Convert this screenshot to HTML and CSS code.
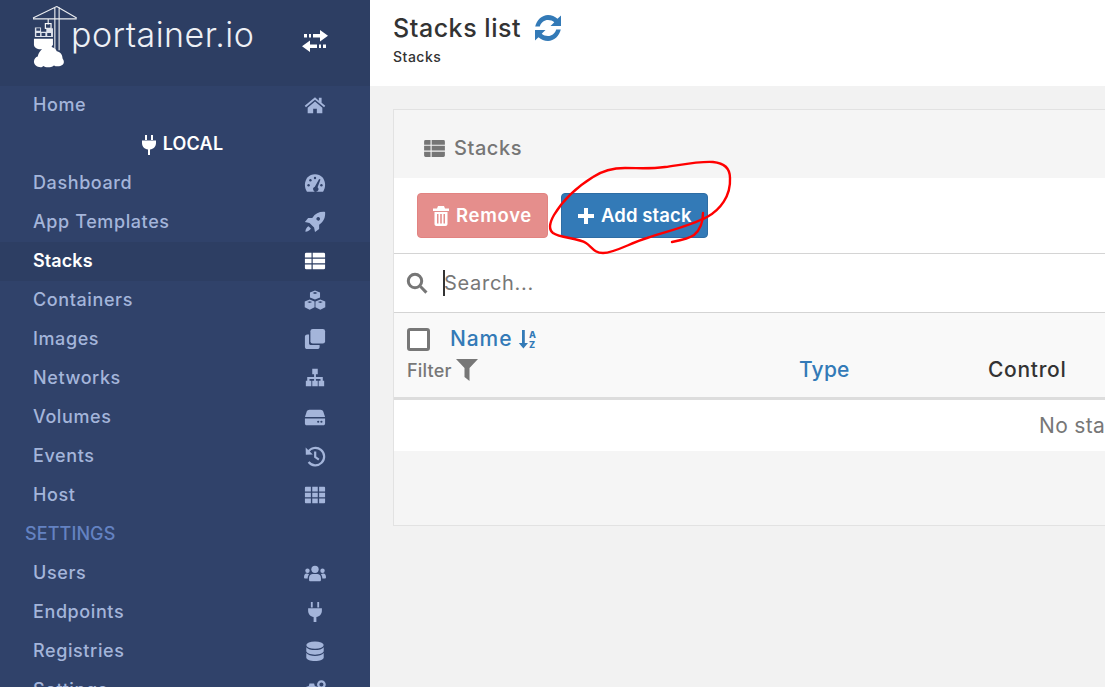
FILE: index.html
```html
<!DOCTYPE html>
<html lang="en">
<head>
<meta charset="utf-8">
<title>Stacks list</title>
<link rel="stylesheet" href="styles.css">
</head>
<body>
<div class="app">
  <aside class="sidebar">
    <div class="brand">
      <svg class="logo" viewBox="0 0 40 70" aria-hidden="true">
        <g fill="none" stroke="#fff" stroke-width="1.2" opacity=".9">
          <path d="M0 18H46M25 5L0 17M25 5L46 17M23 5.500V51M27.500 5.500V51M16 18V24"/>
        </g>
        <rect x="13" y="23" width="6" height="5" fill="none" stroke="#fff" stroke-width="1.200"/>
        <path fill="#dfe3ec" d="M2 27h6.500v4.500H14V28h7v9H2zM7.500 28h-4v2.500h4zM9 33h4v3H9zM15 33h4v3h-4zM3.500 33h4v3h-4z" fill-rule="evenodd"/>
        <path fill="#fff" d="M1 39h20v6c-1 3-4 5-8 5H8c-4 0-7-2-7-5z"/>
        <path fill="#fff" d="M8 69c-4 0-7-2.500-7-6 0-3 2-5 4-5.500C6 53 10 47 16 47c4 0 8 2 9 5 3 .5 6 3 6 7 0 1.500 1.500 2 1.500 4.500S30 68 26 68c-2 0-3-.5-4-1-2 1.500-4 2-6 2-2.500 0-4-1-5-1.500-1 .8-2 1.500-3 1.500z"/>
      </svg>
      <span class="brand-text">portainer.io</span>
      <svg class="switch" viewBox="0 0 26 24" aria-hidden="true">
        <path fill="#fff" d="M2 5h3v3.500H2zM7 5h2v3.500H7zM11 5h7V1l8 5.700-8 5.800V8.500h-7zM0 17.300l8-5.800v4h7V19H8v4zM17 15.500h2V19h-2zM21 15.500h3V19h-3z"/>
      </svg>
    </div>
    <nav class="nav">
      <a class="item"><span>Home</span>
        <svg class="ico" viewBox="0 0 24 24"><path d="M12 3.500L.8 12.800l1.300 1.600L12 6.300l9.900 8.100 1.300-1.600-4-3.300V4h-3v3.300z"/><path d="M12 8.300L4 14.900V21h6v-5h4v5h6v-6.100z"/></svg>
      </a>
      <div class="endpoint">
        <svg class="endpoint-ico" viewBox="0 0 16 20"><path d="M4 0h2v5H4zM10 0h2v5h-2zM1 5.500h14v2.500c0 3.500-2.500 6-6 6.500V20H7v-5.500C3.500 14 1 11.500 1 8z"/></svg>
        <span>LOCAL</span>
      </div>
      <a class="item"><span>Dashboard</span>
        <svg class="ico" viewBox="0 0 24 24"><path d="M12 2.500C5.500 2.500 1 7.500 1 14c0 3 .8 5.300 2.200 7.500h17.600C22.200 19.300 23 17 23 14c0-6.500-4.500-11.500-11-11.500z"/><g fill="#30426a"><circle cx="5" cy="14.500" r="1.300"/><circle cx="7" cy="9" r="1.300"/><circle cx="12" cy="6.500" r="1.300"/><circle cx="19" cy="14.500" r="1.300"/><path d="M16.500 7.500l1.500.6-3.200 8.600a2.800 2.800 0 1 1-3-.6z"/></g></svg>
      </a>
      <a class="item"><span>App Templates</span>
        <svg class="ico" viewBox="0 0 24 24"><path d="M23 1c-6-.5-10.500 1.500-14 6.500H4.500L1 12l5 1 5 5 1 5 4.500-3.500V15c5-3.500 7-8 6.500-14zM17.500 8.500a2 2 0 1 1 0-.01z"/><path d="M5 16.500c-2 .8-3.500 3.500-3.500 6 2.500 0 5-1.500 6-3.500z"/></svg>
      </a>
      <a class="item active"><span>Stacks</span>
        <svg class="ico" viewBox="0 0 24 24"><path d="M2.500 3h5.700v5.300H1V4.500A1.500 1.500 0 0 1 2.500 3zM9.500 3h12A1.500 1.500 0 0 1 23 4.500v3.800H9.500zM1 9.500h7.200v5H1zM9.500 9.500H23v5H9.500zM1 15.700h7.200V21H2.500A1.500 1.500 0 0 1 1 19.500zM9.500 15.700H23v3.800a1.500 1.500 0 0 1-1.500 1.500h-12z"/></svg>
      </a>
      <a class="item"><span>Containers</span>
        <svg class="ico" viewBox="0 0 24 24"><path fill-rule="evenodd" d="M12 1.500l5.500 2.200v5.500L12 11.500 6.500 9.200V3.700zM12 3.300L9.300 4.300 12 5.400l2.700-1.100zM6.200 11.500l5.300 2.200V20L6.200 22.500.8 20v-6.300zM6.200 13.300L3.500 14.300l2.700 1.100 2.700-1.100zM17.800 11.500l5.400 2.200V20l-5.400 2.500L12.500 20v-6.300zM17.800 13.300l-2.700 1 2.700 1.100 2.700-1.100z"/></svg>
      </a>
      <a class="item"><span>Images</span>
        <svg class="ico" viewBox="0 0 24 24"><rect x="7" y="1" width="16" height="16" rx="2.500"/><path d="M3.500 7H5.500v10c0 1 .7 1.600 1.500 1.600h10v2c0 1.400-1 2.400-2.500 2.400h-11C2 23 1 22 1 20.500v-11C1 8 2 7 3.500 7z"/></svg>
      </a>
      <a class="item"><span>Networks</span>
        <svg class="ico" viewBox="0 0 24 24"><path d="M9 2h6v6h-2v3h7.500v4H22v6h-6v-6h2v-2h-5v2h2v6H9v-6h2v-2H6v2h2v6H2v-6h1.500v-4H11V8H9z"/></svg>
      </a>
      <a class="item"><span>Volumes</span>
        <svg class="ico" viewBox="0 0 24 24"><path d="M6 4h12c1.500 0 2.500.8 3 2l2 6H1l2-6c.5-1.200 1.500-2 3-2z"/><path fill-rule="evenodd" d="M1 13.500h22V19c0 1.200-.8 2-2 2H3c-1.200 0-2-.8-2-2zM15.500 16a1.200 1.200 0 1 0 0 2.400 1.200 1.200 0 0 0 0-2.400zM19 16a1.200 1.200 0 1 0 0 2.400A1.200 1.200 0 0 0 19 16z"/></svg>
      </a>
      <a class="item"><span>Events</span>
        <svg class="ico" viewBox="0 0 24 24"><path d="M4.500 7.500A9.500 9.500 0 1 1 5 18.500" fill="none" stroke="currentColor" stroke-width="2.400"/><path d="M1.800 2.800L2 10.500l7.600-.2zM11 7h2.400v5.500l3.500 2.500-1.400 1.900L11 13.700z"/></svg>
      </a>
      <a class="item"><span>Host</span>
        <svg class="ico" viewBox="0 0 24 24"><path d="M2 3h5.500v5.200H1V4a1 1 0 0 1 1-1zM9 3h6v5.200H9zM16.500 3H22a1 1 0 0 1 1 1v4.200h-6.500zM1 9.500h6.500v5H1zM9 9.500h6v5H9zM16.500 9.500H23v5h-6.500zM1 15.800h6.500V21H2a1 1 0 0 1-1-1zM9 15.800h6V21H9zM16.500 15.800H23V20a1 1 0 0 1-1 1h-5.500z"/></svg>
      </a>
      <div class="section"><span>SETTINGS</span></div>
      <a class="item"><span>Users</span>
        <svg class="ico" viewBox="0 0 24 24"><circle cx="12" cy="8" r="4"/><circle cx="3.800" cy="9.500" r="2.400"/><circle cx="20.200" cy="9.500" r="2.400"/><path d="M5.500 19.500v-2c0-3 2-4.500 4-4.500h5c2 0 4 1.500 4 4.500v2c0 .8-.7 1.500-1.500 1.500H7c-.8 0-1.500-.7-1.500-1.500z"/><path d="M0 17c0-3 1-4.500 3-4.500 1 0 1.500.2 2.500.8C4.500 14.500 4 16 4 18H1c-.6 0-1-.4-1-1zM24 17c0-3-1-4.500-3-4.500-1 0-1.500.2-2.500.8 1 1.200 1.500 2.700 1.500 4.700h3c.6 0 1-.4 1-1z"/></svg>
      </a>
      <a class="item"><span>Endpoints</span>
        <svg class="ico" viewBox="0 0 24 24"><path d="M7.500 1h2v6h-2zM14.500 1h2v6h-2zM4.500 8h15v2.500c0 3.500-2.500 6.300-6 7V23h-3v-5.500c-3.500-.7-6-3.500-6-7z"/></svg>
      </a>
      <a class="item"><span>Registries</span>
        <svg class="ico" viewBox="0 0 24 24"><ellipse cx="12" cy="5.500" rx="9.500" ry="4"/><path d="M2.500 7.800C4 10 8 11 12 11s8-1 9.500-3.200V12c0 2-4 4-9.500 4s-9.500-2-9.500-4z"/><path d="M2.500 14.300C4 16.500 8 17.500 12 17.500s8-1 9.500-3.200V19c0 2-4 4-9.500 4s-9.500-2-9.500-4z"/></svg>
      </a>
      <a class="item"><span>Settings</span>
        <svg class="ico" viewBox="0 0 24 24"><path d="M6 5h5l.8 2.500 2.700 1v5l-2.700 1L11 17H6l-.8-2.500-2.700-1v-5l2.700-1z"/><circle cx="19" cy="6" r="3.500" fill="none" stroke="currentColor" stroke-width="2.500"/></svg>
      </a>
    </nav>
  </aside>

  <main class="main">
    <header class="page-head">
      <div class="title-row">
        <h1 class="title">Stacks list</h1>
        <svg class="refresh" viewBox="0 0 28 28"><path d="M27 1.500v10.500H16.500l3.800-3.800C18.700 6.700 16.500 6 14 6 10.200 6 7 8.400 5.800 12.500H1.200C2.700 6 8 1 14 1c3.600 0 7 1.400 9.500 3.700z"/><path d="M1 26.500V16h10.500l-3.800 3.800C9.300 21.300 11.500 22 14 22c3.800 0 7-2.400 8.200-6.500h4.600C25.300 22 20 27 14 27c-3.600 0-7-1.400-9.500-3.700z"/></svg>
      </div>
      <div class="crumb">Stacks</div>
    </header>
    <div class="content">
      <section class="panel">
        <div class="panel-head">
          <svg class="panel-ico" viewBox="0 0 22 18"><path d="M1.500 0h5.300v5H0V1.500A1.500 1.500 0 0 1 1.500 0zM8 0h12.500A1.500 1.500 0 0 1 22 1.500V5H8zM0 6.200h6.800v5H0zM8 6.200h14v5H8zM0 12.400h6.800V18H1.500A1.500 1.500 0 0 1 0 16.500zM8 12.400h14v4.100a1.500 1.500 0 0 1-1.500 1.500H8z"/></svg>
          <span>Stacks</span>
        </div>
        <div class="toolbar">
          <button class="btn btn-danger">
            <svg class="btn-ico" viewBox="0 0 16 20"><path fill-rule="evenodd" d="M5 0h6l1 2.500h4V5H0V2.500h4zM1.500 6h13v12c0 1-.8 2-2 2h-9c-1.200 0-2-1-2-2zM4 8v9.500h1.500V8zM7.200 8v9.500h1.600V8zM10.500 8v9.500H12V8z"/></svg>
            <span class="btn-label">Remove</span>
          </button>
          <button class="btn btn-primary">
            <svg class="btn-ico plus" viewBox="0 0 18 18"><path d="M7 1h4v6h6v4h-6v6H7v-6H1V7h6z"/></svg>
            <span class="btn-label">Add stack</span>
          </button>
        </div>
        <div class="search">
          <svg class="search-ico" viewBox="0 0 22 22"><circle cx="9" cy="9" r="6.700" fill="none" stroke="currentColor" stroke-width="3"/><path d="M13.500 15.500l2-2 6 6-2.200 2.200z"/></svg>
          <span class="search-field">Search...</span>
        </div>
        <div class="thead">
          <div class="col col-name">
            <div class="name-row">
              <span class="check"></span>
              <a class="th-link th-name">Name</a>
              <svg class="sort" viewBox="0 0 20 20"><path fill="currentColor" d="M4 1h2.800v13h3.200L5.400 19.500 .8 14H4z"/><text x="11" y="8.500" class="sort-a">A</text><text x="11" y="19" class="sort-a">Z</text></svg>
            </div>
            <div class="filter-row">
              <span>Filter</span>
              <svg class="funnel" viewBox="0 0 22 22"><path d="M0 0h22l-8.500 9v13l-5-4V9z"/></svg>
            </div>
          </div>
          <div class="col"><a class="th-link">Type</a></div>
          <div class="col th-plain">Control</div>
        </div>
        <div class="empty">No stacks available.</div>
        <div class="panel-foot"></div>
      </section>
    </div>
  </main>
</div>
<svg class="scribble" viewBox="0 0 1105 687" aria-hidden="true">
  <path d="M730 178C731 196 720 210 707 217C690 226 668 231 647 238C630 243 615 253 603 253C594 253 592 247 586 243C578 238 560 238 553 233C548 229 550 222 554 215C560 205 572 190 593 177C602 171 612 168 625 168C640 168 650 169 665 167C680 165 700 161 713 162C724 163 730 168 730 178Z" />
  <path d="M672 242C682 240 690 238 694 235C700 230 703 222 703 213" />
</svg>
</body>
</html>
```
FILE: styles.css
```css
* { box-sizing: border-box; }
html, body { margin: 0; height: 687px; overflow: hidden; }
body { font-family: Inter, "Open Sans", "Liberation Sans", sans-serif; background: #f2f2f2; color: #333; }
.app { display: flex; width: 1105px; height: 687px; overflow: hidden; }

.sidebar { flex: 0 0 370px; background: #30426a; overflow: hidden; }
.brand { height: 86px; background: #2d3e63; display: flex; align-items: flex-start; padding-left: 33px; }
.logo { width: 38px; height: 70px; flex: none; overflow: visible; }
.brand-text { color: #eef0f5; font-size: 34px; font-weight: 300; line-height: 40px; margin-top: 15px; letter-spacing: .45px; width: 183px; white-space: nowrap; flex: none; }
.switch { width: 26px; height: 24px; margin: 29px 0 0 48px; flex: none; }

.item, .endpoint, .section { height: 39px; display: flex; align-items: center; font-size: 18px; letter-spacing: .6px; }
.item span, .endpoint span, .section span { padding-bottom: 2px; }
.item { padding: 0 44px 0 33px; justify-content: space-between; color: #a4b5da; font-weight: 500; }
.item.active { color: #fff; font-weight: 600; background: #2d3e63; letter-spacing: .1px; }
.ico { width: 22px; height: 22px; fill: currentColor; flex: none; margin-bottom: 2px; }
.endpoint { justify-content: center; gap: 6px; color: #fff; font-weight: 600; padding-right: 6px; letter-spacing: .2px; }
.endpoint-ico { width: 16px; height: 20px; fill: #fff; }
.section { padding-left: 25px; color: #6482c2; font-weight: 500; letter-spacing: .1px; }

.main { flex: none; width: 1560px; }
.page-head { height: 86px; background: #fff; padding: 12px 0 0 23px; }
.title-row { display: flex; align-items: center; gap: 13px; height: 32px; }
.title { margin: 0; font-size: 25px; font-weight: 500; color: #333; letter-spacing: .55px; }
.refresh { width: 28px; height: 28px; fill: #337ab7; }
.crumb { font-size: 14px; font-weight: 500; margin-top: 4px; color: #333; letter-spacing: .5px; }

.content { padding: 23px 23px 0; }
.panel { border: 1px solid #e2e2e2; background: #fff; width: 1496px; }
.panel-head { height: 68px; background: #f5f5f5; display: flex; align-items: center; gap: 9px; padding: 8px 0 0 30px; color: #767676; font-size: 20px; font-weight: 500; letter-spacing: .55px; }
.panel-ico { width: 21px; height: 17px; fill: #767676; }

.toolbar { height: 76px; display: flex; align-items: flex-start; gap: 13px; padding: 15px 0 0 23px; border-bottom: 1px solid #d4d4d4; }
.btn { height: 45px; border-radius: 4px; border: 1px solid; color: #fff; font: 600 18.500px Inter, "Open Sans", sans-serif; display: flex; align-items: center; gap: 7px; padding: 0 15px; }
.btn-label { padding-bottom: 2px; }
.btn-danger { width: 131px; background: #e58e8c; border-color: #e28381; letter-spacing: .7px; }
.btn-primary { width: 147px; background: #337ab7; border-color: #2e6da4; letter-spacing: .1px; gap: 6px; }
.btn-ico { width: 16px; height: 20px; fill: #fff; flex: none; }
.plus { width: 18px; height: 18px; }

.search { height: 59px; display: flex; align-items: center; gap: 15px; padding-left: 12px; border-bottom: 1px solid #d4d4d4; color: #767676; }
.search-ico { width: 22px; height: 22px; fill: currentColor; flex: none; }
.search-field { border-left: 2px solid #333; height: 26px; line-height: 26px; font-size: 20px; letter-spacing: .7px; color: #777; text-indent: -1px; }

.thead { height: 87px; background: #f9f9f9; border-bottom: 3px solid #ddd; display: grid; grid-template-columns: 392px 189px 1fr; }
.col { padding: 45px 0 0 13px; font-size: 21px; font-weight: 500; line-height: 24px; letter-spacing: .2px; }
.col-name { padding: 14px 0 0 13px; }
.th-link { color: #337ab7; }
.th-name { letter-spacing: .9px; }
.th-plain { color: #333; letter-spacing: .7px; }
.name-row { display: flex; align-items: center; height: 24px; }
.check { width: 23px; height: 23px; border: 3px solid #777; border-radius: 3px; background: #fff; margin-right: 20px; flex: none; }
.sort { width: 20px; height: 20px; margin-left: 6px; color: #337ab7; overflow: visible; }
.sort-a { font: 800 9px Inter, sans-serif; fill: #337ab7; }
.filter-row { display: flex; align-items: center; gap: 4px; height: 24px; margin-top: 8px; font-size: 18px; color: #777; letter-spacing: .2px; }
.funnel { width: 22px; height: 22px; fill: #777; margin-top: -3px; }

.empty { height: 51px; display: flex; align-items: center; justify-content: center; font-size: 21px; color: #777; letter-spacing: .3px; }
.panel-foot { height: 74px; background: #f5f5f5; }

.scribble { position: absolute; left: 0; top: 0; width: 1105px; height: 687px; fill: none; stroke: #f00; stroke-width: 2.400; stroke-linecap: round; stroke-linejoin: round; pointer-events: none; }
```
